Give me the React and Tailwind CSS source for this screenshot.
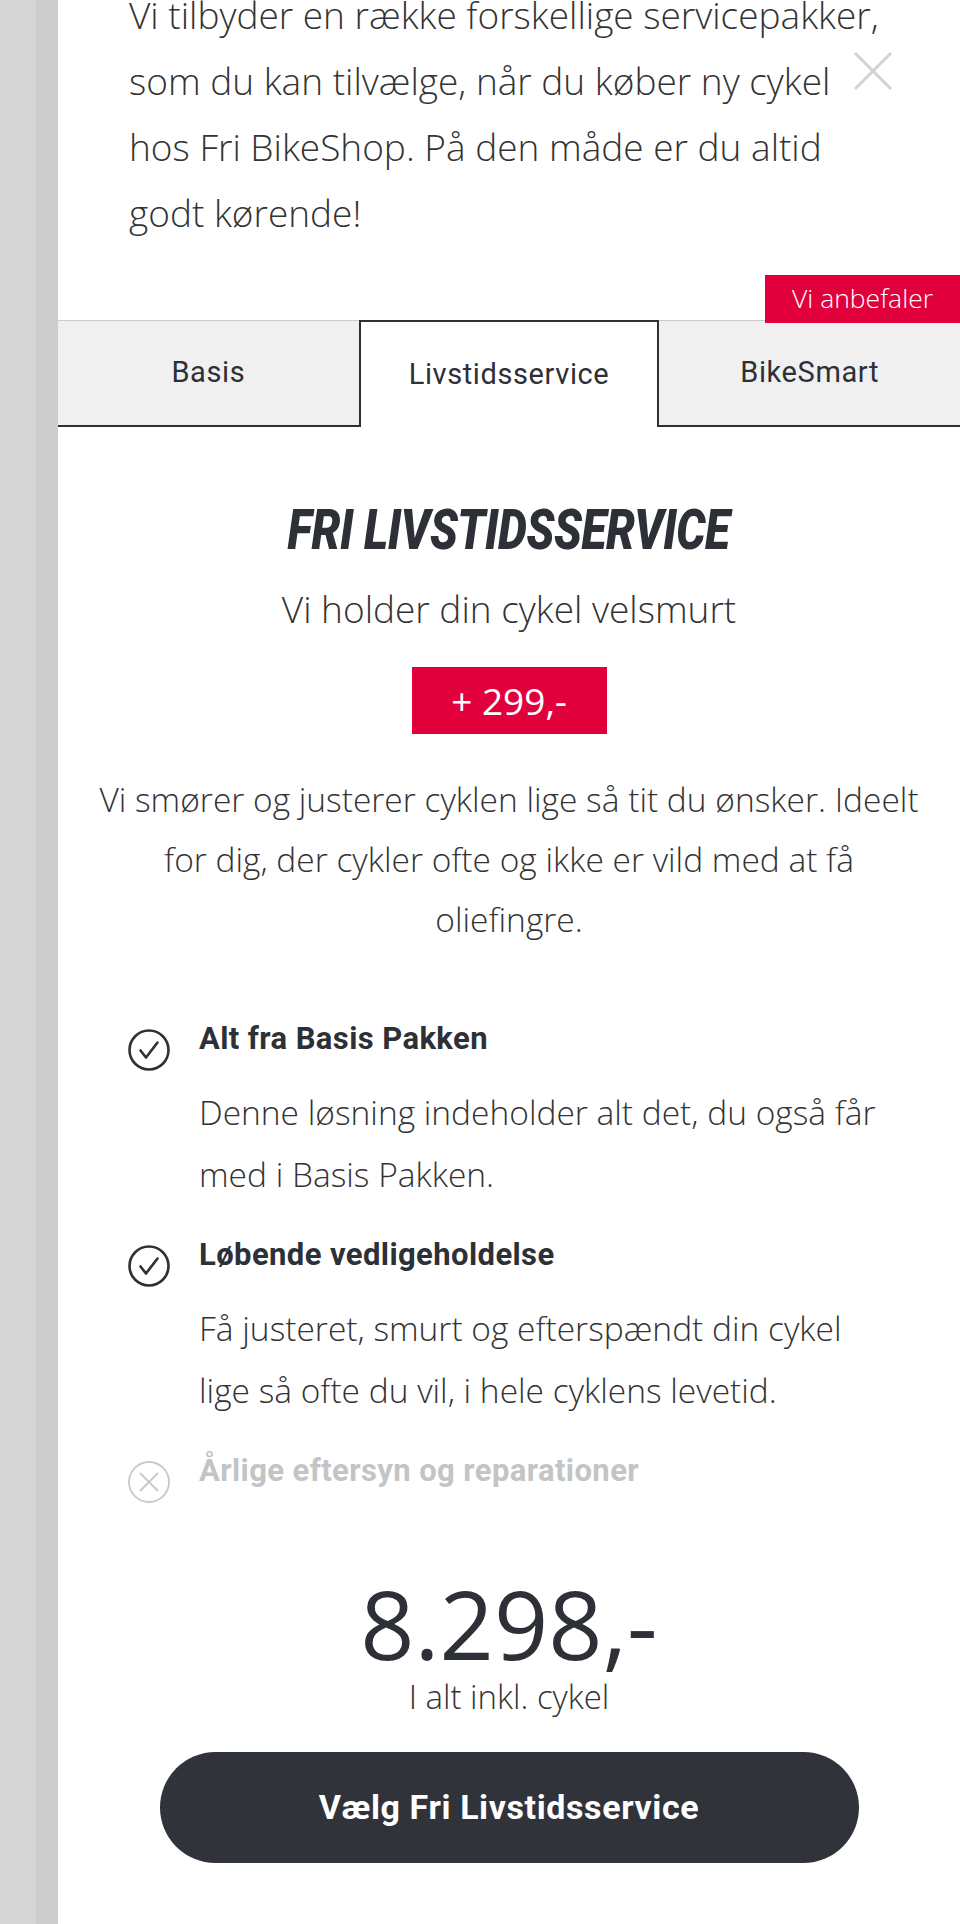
import React from "react";

const body = "font-['Open_Sans',sans-serif]";
const cond = "font-['Roboto',sans-serif]";

function CheckIcon() {
  return (
    <svg width="42" height="42" viewBox="0 0 42 42" fill="none" className="shrink-0">
      <circle cx="21" cy="21" r="19.5" stroke="#2d3037" strokeWidth="2.6" />
      <path d="M12.5 21.5 L18 28.5 L29.5 13.5" stroke="#2d3037" strokeWidth="2.6" strokeLinecap="round" strokeLinejoin="round" />
    </svg>
  );
}

function CrossIcon() {
  return (
    <svg width="42" height="42" viewBox="0 0 42 42" fill="none" className="shrink-0">
      <circle cx="21" cy="21" r="20" stroke="#c8c8c8" strokeWidth="1.8" />
      <path d="M12.5 12.5 L29.5 29.5 M29.5 12.5 L12.5 29.5" stroke="#c8c8c8" strokeWidth="1.8" strokeLinecap="round" />
    </svg>
  );
}

function Feature({ ok, title, children }) {
  return (
    <div className="flex gap-[29px]">
      <div className="mt-[10px]">{ok ? <CheckIcon /> : <CrossIcon />}</div>
      <div>
        <h3 className={`${cond} text-[31px] leading-[40px] font-bold tracking-[0.4px] ${ok ? "text-[#2d3037]" : "text-[#c4c4c4]"}`}>
          {title}
        </h3>
        {children && (
          <p className={`${body} mt-[22px] whitespace-nowrap text-[33.5px] leading-[62px] font-light text-[#333]`}>{children}</p>
        )}
      </div>
    </div>
  );
}

function Tab({ active, children }) {
  return (
    <div
      className={
        active
          ? "flex items-center justify-center border-2 border-b-0 border-[#2d3037] bg-white"
          : "flex items-center justify-center border-t border-b-2 border-t-[#cccccc] border-b-[#2d3037] bg-[#f0f0f0]"
      }
    >
      <span className={`${cond} text-[29px] font-normal tracking-[0.6px] text-[#2d3037]`}>{children}</span>
    </div>
  );
}

export default function App() {
  return (
    <div className="flex min-h-[1924px] w-[960px] overflow-hidden bg-white">
      <div className="w-[36px] shrink-0 bg-[#d6d6d6]" />
      <div className="w-[22px] shrink-0 bg-[#cdcdcd]" />
      <main className="flex flex-1 flex-col bg-white">
        <section className="relative -mt-[18px] pl-[71px] pr-[20px]">
          <p className={`${body} whitespace-nowrap text-[37px] leading-[66px] font-light text-[#333]`}>
            Vi tilbyder en række forskellige servicepakker,
            <br />
            som du kan tilvælge, når du køber ny cykel
            <br />
            hos Fri BikeShop. På den måde er du altid
            <br />
            godt kørende!
          </p>
          <button className="absolute left-[795px] top-[69px] h-[40px] w-[40px]" aria-label="Luk">
            <svg width="40" height="40" viewBox="0 0 40 40">
              <path d="M2 2 L38 38 M38 2 L2 38" stroke="#d2d2d2" strokeWidth="3" />
            </svg>
          </button>
        </section>

        <div className="relative mt-[74px] grid h-[107px] grid-cols-3">
          <Tab>Basis</Tab>
          <Tab active>Livstidsservice</Tab>
          <Tab>BikeSmart</Tab>
          <div className={`${body} absolute right-0 top-[-45px] z-10 flex h-[48px] w-[195px] items-center justify-center bg-[#e2003c] text-[26.5px] font-light text-white`}>
            Vi anbefaler
          </div>
        </div>

        <div className="flex flex-col items-center">
          <h2 className={`${cond} mt-[75px] inline-block scale-x-[0.82] text-[56px] leading-[56px] font-black italic tracking-[-0.5px] text-[#2d3037]`}>
            FRI LIVSTIDSSERVICE
          </h2>
          <p className={`${body} mt-[29px] whitespace-nowrap text-[37px] leading-[44px] font-light text-[#333]`}>Vi holder din cykel velsmurt</p>
          <div className={`${body} mt-[36px] flex h-[67px] w-[195px] items-center justify-center bg-[#e2003c] text-[37px] font-medium text-white`}>
            + 299,-
          </div>
          <p className={`${body} mt-[35px] whitespace-nowrap text-center text-[33.5px] leading-[60px] font-light text-[#333]`}>
            Vi smører og justerer cyklen lige så tit du ønsker. Ideelt
            <br />
            for dig, der cykler ofte og ikke er vild med at få
            <br />
            oliefingre.
          </p>
        </div>

        <div className="mt-[70px] flex flex-col gap-[30px] pl-[70px]">
          <Feature ok title="Alt fra Basis Pakken">
            Denne løsning indeholder alt det, du også får
            <br />
            med i Basis Pakken.
          </Feature>
          <Feature ok title="Løbende vedligeholdelse">
            Få justeret, smurt og efterspændt din cykel
            <br />
            lige så ofte du vil, i hele cyklens levetid.
          </Feature>
          <Feature title="Årlige eftersyn og reparationer" />
        </div>

        <div className="flex flex-col items-center">
          <div className={`${body} mt-[73px] text-[95px] leading-[95px] font-normal text-[#2d3037]`}>8.298,-</div>
          <div className={`${body} mt-[6px] whitespace-nowrap text-[33px] leading-[40px] font-light text-[#333]`}>I alt inkl. cykel</div>
          <button className="mt-[35px] flex h-[111px] w-[699px] items-center justify-center rounded-full bg-[#30333a]">
            <span className={`${cond} text-[34px] font-bold tracking-[0.6px] text-white`}>Vælg Fri Livstidsservice</span>
          </button>
        </div>
      </main>
    </div>
  );
}
